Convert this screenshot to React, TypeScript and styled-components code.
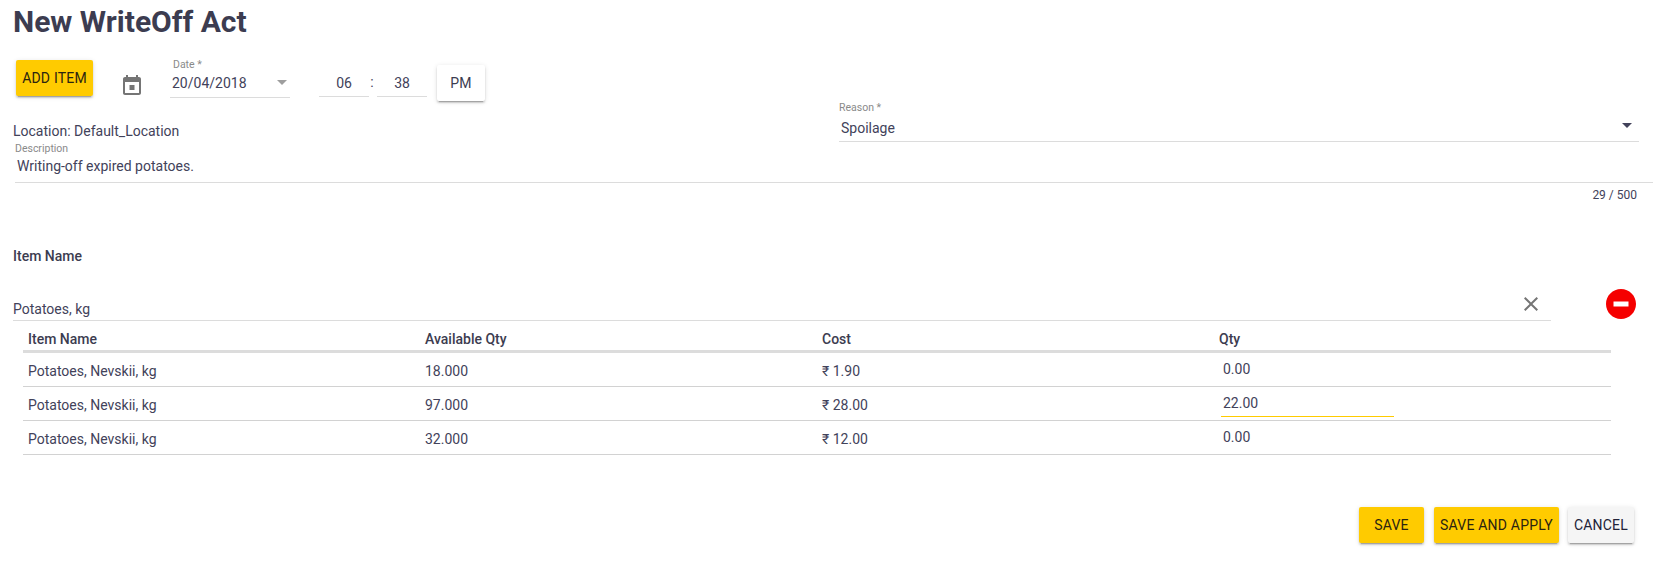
import React from 'react';
import styled, { createGlobalStyle } from 'styled-components';

const INK = '#42425a';
const LINE = '#dcdcdc';

const GlobalStyle = createGlobalStyle`
  html, body {
    margin: 0;
    padding: 0;
    background: #fff;
    color: ${INK};
    font-family: Roboto, "Liberation Sans", sans-serif;
    font-size: 14px;
  }
`;

const Page = styled.div`
  width: 1653px;
  height: 576px;
  overflow: hidden;
  display: flex;
  flex-direction: column;
`;

const Title = styled.h1`
  margin: 3px 0 0 13px;
  font-size: 30px;
  line-height: 38px;
  font-weight: 700;
  color: #3c3c50;
`;

const Toolbar = styled.div`
  height: 56px;
  margin: 19px 0 0 16px;
  display: flex;
  align-items: flex-start;
`;

const RaisedButton = styled.button<{ $tone?: 'primary' | 'plain' | 'muted' }>`
  height: 36px;
  padding: 0;
  border: 0;
  border-radius: 2px;
  font-family: inherit;
  font-size: 14px;
  font-weight: 400;
  letter-spacing: 0.2px;
  text-transform: uppercase;
  color: ${(p) => (p.$tone === 'primary' ? '#2b2410' : p.$tone === 'muted' ? '#222238' : '#3c3c50')};
  background: ${(p) => (p.$tone === 'primary' ? '#ffcb00' : p.$tone === 'muted' ? '#f5f5f5' : '#fff')};
  box-shadow: 0 3px 1px -2px rgba(0, 0, 0, 0.2), 0 2px 2px 0 rgba(0, 0, 0, 0.14), 0 1px 5px 0 rgba(0, 0, 0, 0.12);
`;

const AddButton = styled(RaisedButton)`
  width: 77px;
`;

const CalendarIcon = styled.svg`
  width: 24px;
  height: 24px;
  margin: 14px 0 0 27px;
  fill: #757575;
`;

const DateField = styled.div`
  width: 120px;
  height: 37px;
  margin-left: 26px;
  border-bottom: 1px solid ${LINE};
  position: relative;
`;

const SmallLabel = styled.div`
  font-size: 10.5px;
  line-height: 12px;
  color: #8a8a8a;
`;

const DateLabel = styled(SmallLabel)`
  margin-left: 3px;
  margin-top: -1px;
`;

const DateValue = styled.div`
  margin: 2px 0 0 2px;
  line-height: 20px;
  font-size: 14px;
`;

const Caret = styled.span<{ $color: string }>`
  position: absolute;
  width: 0;
  height: 0;
  border-left: 5px solid transparent;
  border-right: 5px solid transparent;
  border-top: 5px solid ${(p) => p.$color};
`;

const DateCaret = styled(Caret)`
  right: 3px;
  top: 20px;
`;

const TimeField = styled.div`
  width: 50px;
  height: 37px;
  box-sizing: border-box;
  padding-top: 13px;
  border-bottom: 1px solid ${LINE};
  text-align: center;
  line-height: 20px;
`;

const HourField = styled(TimeField)`
  margin-left: 29px;
`;

const Colon = styled.div`
  width: 8px;
  box-sizing: border-box;
  padding: 12px 2px 0 0;
  line-height: 20px;
  text-align: center;
`;

const PmButton = styled(RaisedButton)`
  width: 48px;
  margin: 5px 0 0 10px;
`;

const LocationRow = styled.div`
  display: flex;
  align-items: flex-end;
  padding-left: 13px;
  height: 25px;
`;

const LocationText = styled.div`
  flex: 0 0 826px;
  line-height: 20px;
`;

const ReasonField = styled.div`
  width: 800px;
  height: 40px;
  margin-top: -14px;
  box-sizing: border-box;
  border-bottom: 1px solid ${LINE};
  position: relative;
  align-self: flex-start;
`;

const ReasonValue = styled.div`
  margin: 4px 0 0 2px;
  line-height: 20px;
`;

const ReasonCaret = styled(Caret)`
  right: 7px;
  top: 21px;
`;

const DescriptionField = styled.div`
  margin: 0 0 0 15px;
  height: 42px;
  box-sizing: border-box;
  border-bottom: 1px solid ${LINE};
  padding-top: 2px;
`;

const DescriptionValue = styled.div`
  margin: 1px 0 0 2px;
  line-height: 20px;
`;

const Counter = styled.div`
  margin: 5px 16px 0 0;
  text-align: right;
  font-size: 12px;
  line-height: 14px;
`;

const SectionLabel = styled.div`
  margin: 44px 0 0 13px;
  font-size: 14px;
  line-height: 20px;
  font-weight: 500;
  color: #3c3c50;
`;

const ItemRow = styled.div`
  margin: 21px 0 0 13px;
  display: flex;
  align-items: flex-start;
`;

const ItemField = styled.div`
  width: 1538px;
  height: 34px;
  box-sizing: border-box;
  border-bottom: 1px solid ${LINE};
  display: flex;
  align-items: flex-start;
  justify-content: space-between;
  padding: 12px 8px 0 0;
  line-height: 20px;
`;

const ClearIcon = styled.svg`
  width: 24px;
  height: 24px;
  margin-top: -7px;
  fill: #757575;
`;

const RemoveIcon = styled.svg`
  width: 36px;
  height: 36px;
  margin: -1px 0 -1px 52px;
  fill: #f50000;
`;

const ItemsTable = styled.table`
  width: 1588px;
  margin-left: 23px;
  border-collapse: separate;
  border-spacing: 0;
  table-layout: fixed;
`;

const HeadCell = styled.th`
  height: 32px;
  padding: 6px 0 0 5px;
  box-sizing: border-box;
  border-bottom: 3px solid ${LINE};
  text-align: left;
  font-size: 14px;
  font-weight: 500;
  color: #3c3c50;
`;

const Cell = styled.td`
  height: 34px;
  padding: 3px 0 0 5px;
  box-sizing: border-box;
  border-bottom: 1px solid #d2d2d2;
  font-size: 14px;
`;

const QtyCell = styled(Cell)`
  padding-top: 0;
  vertical-align: top;
`;

const QtyInput = styled.div<{ $active?: boolean }>`
  width: 173px;
  height: 30px;
  box-sizing: border-box;
  margin-left: 2px;
  padding: 6px 0 0 2px;
  line-height: 20px;
  border-bottom: 1px solid ${(p) => (p.$active ? '#ffcb00' : 'transparent')};
`;

const Footer = styled.div`
  margin: 52px 19px 0 0;
  display: flex;
  justify-content: flex-end;
  gap: 10px;
`;

const SaveButton = styled(RaisedButton)`
  width: 65px;
`;

const SaveApplyButton = styled(RaisedButton)`
  width: 125px;
`;

const CancelButton = styled(RaisedButton)`
  width: 66px;
  margin-left: -1px;
`;

const rows = [
  { name: 'Potatoes, Nevskii, kg', available: '18.000', cost: '₹ 1.90', qty: '0.00', active: false },
  { name: 'Potatoes, Nevskii, kg', available: '97.000', cost: '₹ 28.00', qty: '22.00', active: true },
  { name: 'Potatoes, Nevskii, kg', available: '32.000', cost: '₹ 12.00', qty: '0.00', active: false },
];

const App: React.FC = () => {
  return (
    <Page>
      <GlobalStyle />
      <Title>New WriteOff Act</Title>
      <Toolbar>
        <AddButton $tone="primary">Add Item</AddButton>
        <CalendarIcon viewBox="0 0 24 24">
          <path d="M19 3h-1V1h-2v2H8V1H6v2H5c-1.11 0-1.99.9-1.99 2L3 19c0 1.1.89 2 2 2h14c1.1 0 2-.9 2-2V5c0-1.1-.9-2-2-2zm0 16H5V8h14v11zM9.5 11h5v5h-5z" />
        </CalendarIcon>
        <DateField>
          <DateLabel>Date *</DateLabel>
          <DateValue>20/04/2018</DateValue>
          <DateCaret $color="#9e9e9e" />
        </DateField>
        <HourField>06</HourField>
        <Colon>:</Colon>
        <TimeField>38</TimeField>
        <PmButton $tone="plain">PM</PmButton>
      </Toolbar>
      <LocationRow>
        <LocationText>Location: Default_Location</LocationText>
        <ReasonField>
          <SmallLabel>Reason *</SmallLabel>
          <ReasonValue>Spoilage</ReasonValue>
          <ReasonCaret $color={INK} />
        </ReasonField>
      </LocationRow>
      <DescriptionField>
        <SmallLabel>Description</SmallLabel>
        <DescriptionValue>Writing-off expired potatoes.</DescriptionValue>
      </DescriptionField>
      <Counter>29 / 500</Counter>
      <SectionLabel>Item Name</SectionLabel>
      <ItemRow>
        <ItemField>
          Potatoes, kg
          <ClearIcon viewBox="0 0 24 24">
            <path d="M19 6.41 17.59 5 12 10.59 6.41 5 5 6.41 10.59 12 5 17.59 6.41 19 12 13.41 17.59 19 19 17.59 13.41 12z" />
          </ClearIcon>
        </ItemField>
        <RemoveIcon viewBox="0 0 24 24">
          <path d="M12 2C6.48 2 2 6.48 2 12s4.48 10 10 10 10-4.48 10-10S17.52 2 12 2zm5 11.6H7v-3.2h10v3.2z" />
        </RemoveIcon>
      </ItemRow>
      <ItemsTable>
        <thead>
          <tr>
            <HeadCell>Item Name</HeadCell>
            <HeadCell>Available Qty</HeadCell>
            <HeadCell>Cost</HeadCell>
            <HeadCell>Qty</HeadCell>
          </tr>
        </thead>
        <tbody>
          {rows.map((row, i) => (
            <tr key={i}>
              <Cell>{row.name}</Cell>
              <Cell>{row.available}</Cell>
              <Cell>{row.cost}</Cell>
              <QtyCell>
                <QtyInput $active={row.active}>{row.qty}</QtyInput>
              </QtyCell>
            </tr>
          ))}
        </tbody>
      </ItemsTable>
      <Footer>
        <SaveButton $tone="primary">Save</SaveButton>
        <SaveApplyButton $tone="primary">Save and Apply</SaveApplyButton>
        <CancelButton $tone="muted">Cancel</CancelButton>
      </Footer>
    </Page>
  );
};

export default App;
